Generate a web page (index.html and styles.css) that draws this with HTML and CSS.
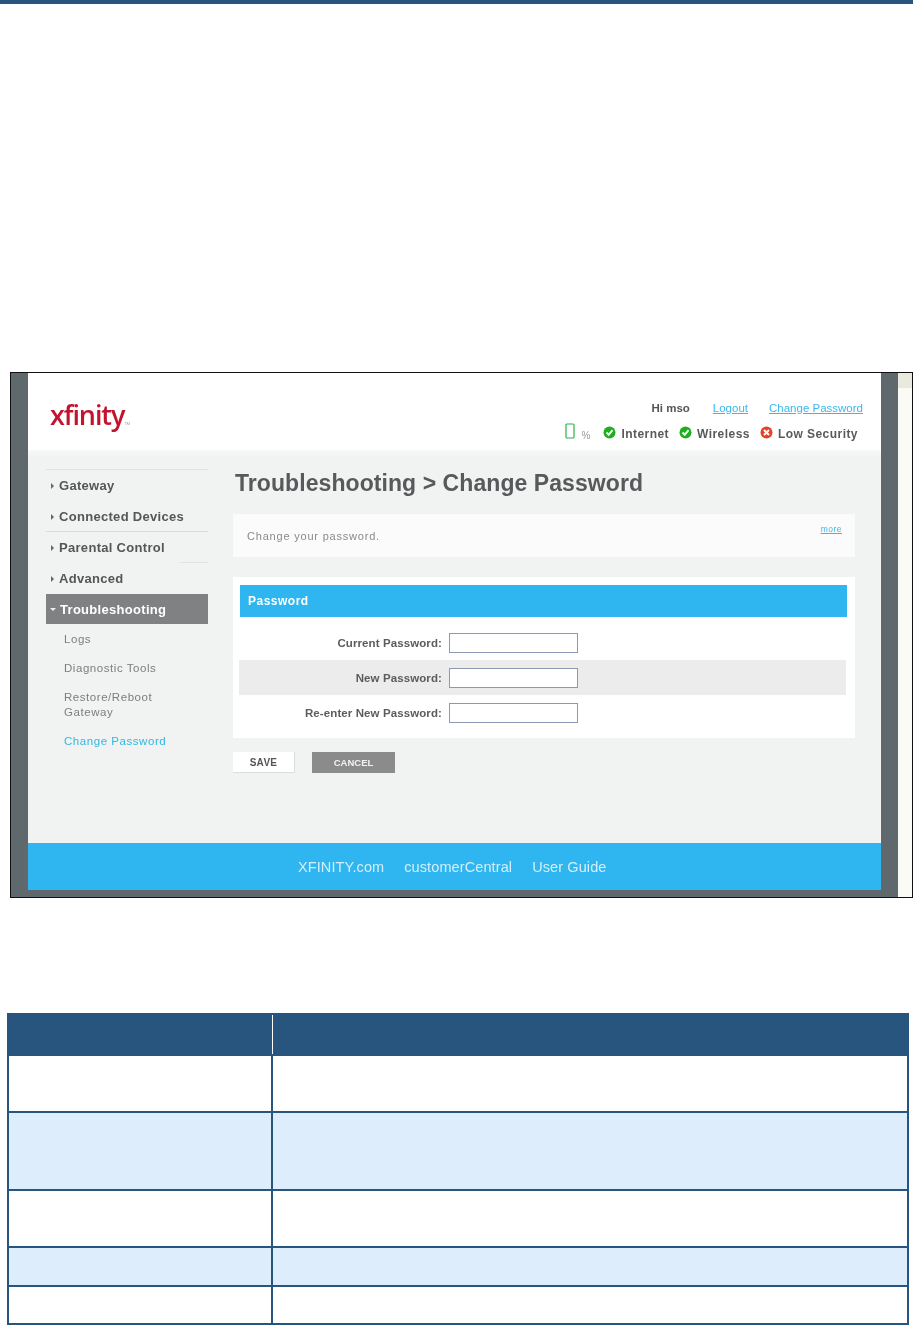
FILE: index.html
```html
<!DOCTYPE html>
<html lang="en">
<head>
    <meta charset="UTF-8">
    <meta name="viewport" content="width=device-width, initial-scale=1.0">
    <title>Change Password</title>
    <link rel="stylesheet" href="styles.css">
</head>
<body>
    <div class="TopBar"></div>

    <div class="Shot">
        <div class="Band"></div>
        <div class="Page">
            <div class="Head">
                <div class="Logo">xfinity<span class="Tm">TM</span></div>
                <div class="HeadRight">
                    <div class="UserRow">
                        <span class="Hi">Hi mso</span>
                        <a class="TopLink">Logout</a>
                        <a class="TopLink">Change Password</a>
                    </div>
                    <div class="StatusRow">
                        <svg class="Battery" width="10" height="16" viewBox="0 0 10 16"><rect x="1" y="1" width="8" height="14" rx="1" fill="none" stroke="#2eb24a" stroke-width="1.2"/></svg>
                        <span class="Pct">%</span>
                        <svg class="Dot" width="13" height="13" viewBox="0 0 13 13"><circle cx="6.5" cy="6.5" r="6" fill="#1fae1f"/><path d="M3.5 6.5l2.2 2.3 3.8-4.6" fill="none" stroke="#fff" stroke-width="2"/></svg>
                        <span class="Stat StatNet">Internet</span>
                        <svg class="Dot" width="13" height="13" viewBox="0 0 13 13"><circle cx="6.5" cy="6.5" r="6" fill="#1fae1f"/><path d="M3.5 6.5l2.2 2.3 3.8-4.6" fill="none" stroke="#fff" stroke-width="2"/></svg>
                        <span class="Stat StatWifi">Wireless</span>
                        <svg class="Dot" width="13" height="13" viewBox="0 0 13 13"><circle cx="6.5" cy="6.5" r="6" fill="#e2412a"/><path d="M4 4l5 5M9 4l-5 5" fill="none" stroke="#fff" stroke-width="2"/></svg>
                        <span class="Stat">Low Security</span>
                    </div>
                </div>
            </div>

            <div class="Main">
                <div class="Side">
                    <div class="Nav NavFirst"><i class="Arrow"></i>Gateway</div>
                    <div class="Nav NavLine"><i class="Arrow"></i>Connected Devices</div>
                    <div class="Nav NavStub"><i class="Arrow"></i>Parental Control</div>
                    <div class="Nav"><i class="Arrow"></i>Advanced</div>
                    <div class="Nav NavOn"><i class="ArrowDown"></i>Troubleshooting</div>
                    <div class="Sub">
                        <div>Logs</div>
                        <div>Diagnostic Tools</div>
                        <div>Restore/Reboot<br>Gateway</div>
                        <div class="SubOn">Change Password</div>
                    </div>
                </div>

                <div class="Content">
                    <h1>Troubleshooting &gt; Change Password</h1>
                    <div class="Desc">
                        <span class="DescText">Change your password.</span>
                        <a class="More">more</a>
                    </div>
                    <div class="Card">
                        <div class="CardHead">Password</div>
                        <div class="Row"><label>Current Password:</label><input type="password"></div>
                        <div class="Row RowAlt"><label>New Password:</label><input type="password"></div>
                        <div class="Row"><label>Re-enter New Password:</label><input type="password"></div>
                    </div>
                    <div class="Btns">
                        <div class="Btn BtnSave">SAVE</div>
                        <div class="Btn BtnCancel">CANCEL</div>
                    </div>
                </div>
            </div>

            <div class="Foot">
                <a>XFINITY.com</a>
                <a>customerCentral</a>
                <a>User Guide</a>
            </div>
        </div>
        <div class="Band"></div>
        <div class="Scroll"><div class="Thumb"></div></div>
    </div>

    <table class="Spec">
        <colgroup><col class="ColA"><col></colgroup>
        <tr class="R0"><th></th><th></th></tr>
        <tr class="R1"><td></td><td></td></tr>
        <tr class="R2 Alt"><td></td><td></td></tr>
        <tr class="R3"><td></td><td></td></tr>
        <tr class="R4 Alt"><td></td><td></td></tr>
        <tr class="R5"><td></td><td></td></tr>
    </table>
</body>
</html>
```

FILE: styles.css
```css
* {
    box-sizing: border-box;
    margin: 0;
    padding: 0;
}
body {
    background: #fff;
    font-family: "Liberation Sans", Arial, sans-serif;
}
.TopBar {
    height: 4px;
    margin-bottom: 368px;
    background: #27557e;
}

/* screenshot frame */
.Shot {
    display: flex;
    width: 903px;
    height: 526px;
    margin-left: 10px;
    border: 1px solid #111;
    background: #5f686c;
}
.Band {
    width: 17px;
    flex: none;
    background: #5f686c;
}
.Scroll {
    flex: 1;
    background: #fbfbf6;
}
.Thumb {
    height: 15px;
    background: #e9e9de;
}
.Page {
    width: 853px;
    height: 517px;
    flex: none;
    display: flex;
    flex-direction: column;
    background: #fff;
    filter: blur(0.4px);
}

/* header */
.Head {
    height: 77px;
    display: flex;
    justify-content: space-between;
    flex: none;
}
.Logo {
    margin: 22px 0 0 22px;
    font-family: "Open Sans", sans-serif;
    font-size: 27px;
    font-weight: 600;
    line-height: 40px;
    letter-spacing: -1.1px;
    color: #c3142f;
}
.Tm {
    font-size: 4px;
    font-weight: normal;
    letter-spacing: 0;
    color: #999;
}
.HeadRight {
    display: flex;
    flex-direction: column;
    align-items: flex-end;
    padding-top: 28px;
}
.UserRow {
    display: flex;
    margin-right: 18px;
    font-size: 11.5px;
    line-height: 14px;
}
.Hi {
    font-weight: bold;
    color: #555;
    margin-right: 23px;
}
.TopLink {
    color: #3bb8ea;
    text-decoration: underline;
    margin-left: 21px;
}
.TopLink:first-of-type {
    margin-left: 0;
}
.StatusRow {
    display: flex;
    align-items: center;
    margin: 10px 23px 0 0;
    height: 18px;
}
.Battery {
    margin-top: -7px;
    margin-right: 7px;
}
.Pct {
    font-size: 10px;
    color: #999;
    margin-top: 3px;
    margin-right: 13px;
}
.Dot {
    margin-top: -4px;
    margin-right: 5px;
}
.Stat {
    font-size: 12px;
    font-weight: bold;
    letter-spacing: 0.45px;
    color: #5a5a5a;
}
.StatNet,
.StatWifi {
    margin-right: 10px;
}

/* body */
.Main {
    flex: 1;
    display: flex;
    gap: 25px;
    padding-left: 18px;
    background: linear-gradient(#f8f8f8, #f1f2f2 8px);
}
.Side {
    width: 162px;
    flex: none;
    padding-top: 19px;
}
.Nav {
    height: 31px;
    display: flex;
    align-items: center;
    padding-left: 5px;
    font-size: 13px;
    font-weight: bold;
    letter-spacing: 0.3px;
    color: #565656;
}
.NavFirst {
    height: 32px;
    border-top: 1px solid #e2e2e2;
}
.NavLine {
    box-shadow: inset 0 -1px 0 #dcdcdc;
}
.NavStub {
    background: linear-gradient(#e2e2e2, #e2e2e2) no-repeat right bottom / 28px 1px;
}
.Arrow {
    width: 0;
    height: 0;
    margin-right: 5px;
    border-left: 3px solid #666;
    border-top: 3px solid transparent;
    border-bottom: 3px solid transparent;
}
.ArrowDown {
    width: 0;
    height: 0;
    margin: 0 4px 0 -1px;
    border-top: 3px solid #eee;
    border-left: 3px solid transparent;
    border-right: 3px solid transparent;
}
.NavOn {
    height: 30px;
    color: #fff;
    background: #7f8182;
}
.Sub {
    display: flex;
    flex-direction: column;
    gap: 14.5px;
    padding: 8px 0 0 18px;
    font-size: 11.5px;
    line-height: 14.5px;
    letter-spacing: 0.55px;
    color: #7c7e7f;
}
.SubOn {
    color: #2fb9e4;
}

.Content {
    width: 622px;
    flex: none;
}
h1 {
    margin: 19px 0 17px 2px;
    font-size: 23px;
    line-height: 28px;
    letter-spacing: 0.07px;
    color: #58595b;
}
.Desc {
    height: 43px;
    display: flex;
    justify-content: space-between;
    padding: 14px 13px 0 14px;
    background: #fbfbfb;
    margin-bottom: 20px;
}
.DescText {
    font-size: 11px;
    line-height: 16px;
    letter-spacing: 0.8px;
    color: #8a8a8a;
}
.More {
    font-size: 8.5px;
    line-height: 3px;
    color: #3bb8ea;
    text-decoration: underline;
    letter-spacing: 0.5px;
}
.Card {
    height: 161px;
    padding: 8px 8px 8px 6px;
    background: #fff;
}
.CardHead {
    height: 32px;
    margin-left: 1px;
    margin-bottom: 8px;
    padding-left: 8px;
    font-size: 12px;
    font-weight: bold;
    line-height: 33px;
    letter-spacing: 0.5px;
    color: #fff;
    background: #2fb5ef;
}
.Row {
    height: 35px;
    display: flex;
    align-items: center;
}
.RowAlt {
    margin-right: 1px;
    background: #ececec;
}
.Row label {
    width: 203px;
    margin-right: 7px;
    text-align: right;
    font-size: 11.5px;
    font-weight: bold;
    letter-spacing: 0.1px;
    color: #5c5c5c;
}
.Row input {
    width: 129px;
    height: 20px;
    border: 1px solid #8a9ab5;
    background: #fff;
}
.Btns {
    display: flex;
    gap: 17px;
    margin-top: 14px;
}
.Btn {
    height: 21px;
    text-align: center;
    font-weight: bold;
    line-height: 21px;
}
.BtnSave {
    width: 62px;
    font-size: 10px;
    letter-spacing: 0.3px;
    color: #555;
    background: #fff;
    border-bottom: 1px solid #ddd;
    border-right: 1px solid #ddd;
}
.BtnCancel {
    width: 83px;
    font-size: 9.5px;
    color: #f2f2f2;
    background: #8b8b8b;
}

/* footer */
.Foot {
    height: 47px;
    flex: none;
    display: flex;
    align-items: center;
    gap: 20px;
    padding-left: 270px;
    font-size: 14.5px;
    letter-spacing: 0.1px;
    color: #d5eefa;
    background: #2fb5ef;
}

/* table under the picture */
.Spec {
    width: 902px;
    margin: 115px 0 0 7px;
    border-collapse: collapse;
    table-layout: fixed;
}
.ColA {
    width: 264px;
}
.Spec th {
    background: #27557e;
    border: 2px solid #27557e;
}
.Spec th:first-child {
    border-right: 1px solid #fff;
}
.Spec th + th {
    border-left: 1px solid #fff;
}
.Spec td {
    border: 2px solid #27557e;
}
.Alt td {
    background: #deedfb;
}
.R0 { height: 41px; }
.R1 { height: 57px; }
.R2 { height: 78px; }
.R3 { height: 57px; }
.R3 td { border-bottom-width: 1px; }
.R4 { height: 39px; }
.R5 { height: 38px; }
```
